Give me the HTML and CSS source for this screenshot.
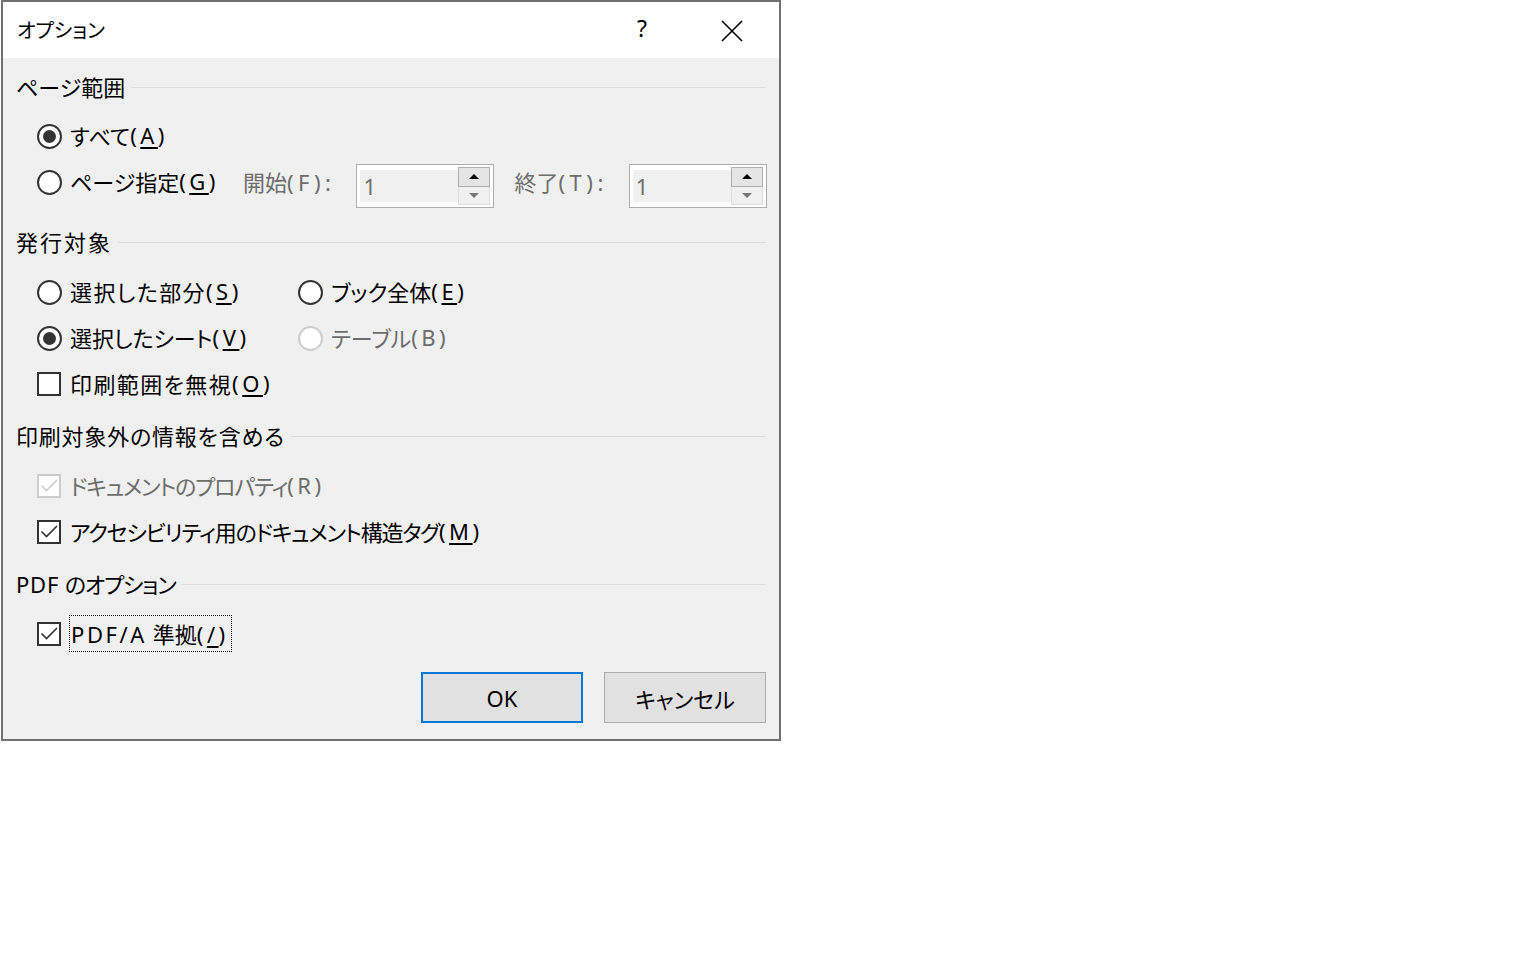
FILE: index.html
```html
<!DOCTYPE html>
<html lang="ja">

<head>
    <meta charset="UTF-8">
    <meta name="viewport" content="width=device-width, initial-scale=1.0">
    <title>オプション</title>
    <link rel="stylesheet" href="styles.css">
</head>

<body>
    <div class="dialog">
        <div class="titleBar">
            <span class="title">オプション</span>
            <span class="help">?</span>
            <span class="close">
                <svg width="22" height="22" viewBox="0 0 22 22">
                    <path d="M1 1L21 21M21 1L1 21" stroke="#000" stroke-width="1.6" fill="none" />
                </svg>
            </span>
        </div>
        <div class="content">
            <div class="group first">
                <div class="groupHead"><span>ページ範囲</span><i></i></div>
                <div class="row">
                    <label class="opt"><span class="radio on"></span>すべて<span class="k">(<u>A</u>)</span></label>
                </div>
                <div class="row">
                    <label class="opt"><span class="radio"></span>ページ指定<span class="k">(<u>G</u>)</span></label>
                    <span class="fieldLabel from">開始<span class="k">(F):</span></span>
                    <div class="spin">
                        <div class="spinText">1</div>
                        <div class="spinBtns">
                            <span class="up"></span>
                            <span class="down"></span>
                        </div>
                    </div>
                    <span class="fieldLabel to">終了<span class="k">(T):</span></span>
                    <div class="spin">
                        <div class="spinText">1</div>
                        <div class="spinBtns">
                            <span class="up"></span>
                            <span class="down"></span>
                        </div>
                    </div>
                </div>
            </div>

            <div class="group second">
                <div class="groupHead"><span class="wide2">発行対象</span><i></i></div>
                <div class="grid">
                    <label class="opt"><span class="radio"></span><span class="wide">選択した部分</span><span class="k">(<u>S</u>)</span></label>
                    <label class="opt"><span class="radio"></span>ブック全体<span class="k">(<u>E</u>)</span></label>
                    <label class="opt"><span class="radio on"></span>選択したシート<span class="k">(<u>V</u>)</span></label>
                    <label class="opt off"><span class="radio"></span>テーブル<span class="k">(B)</span></label>
                </div>
                <div class="row">
                    <label class="opt"><span class="check"></span><span class="wide">印刷範囲を無視</span><span class="k">(<u>O</u>)</span></label>
                </div>
            </div>

            <div class="group">
                <div class="groupHead"><span class="wide1">印刷対象外の情報を含める</span><i></i></div>
                <div class="row">
                    <label class="opt off">
                        <span class="check">
                            <svg width="20" height="20" viewBox="0 0 20 20">
                                <path d="M2.5 9.5L7.5 14.5L18 4" stroke="#ccc" stroke-width="1.6" fill="none" />
                            </svg>
                        </span><span class="tight">ドキュメントのプロパティ</span><span class="k">(R)</span>
                    </label>
                </div>
                <div class="row">
                    <label class="opt">
                        <span class="check">
                            <svg width="20" height="20" viewBox="0 0 20 20">
                                <path d="M2.5 9.5L7.5 14.5L18 4" stroke="#333" stroke-width="1.6" fill="none" />
                            </svg>
                        </span><span class="tight">アクセシビリティ用のドキュメント構造タグ</span><span class="k">(<u>M</u>)</span>
                    </label>
                </div>
            </div>

            <div class="group">
                <div class="groupHead"><span><span class="pdf">PDF</span> <span class="tight">のオプション</span></span><i></i></div>
                <div class="row">
                    <label class="opt">
                        <span class="check">
                            <svg width="20" height="20" viewBox="0 0 20 20">
                                <path d="M2.5 9.5L7.5 14.5L18 4" stroke="#333" stroke-width="1.6" fill="none" />
                            </svg>
                        </span><span class="focus"><span class="k pdfa">PDF/A</span> 準拠<span class="k">(<u>/</u>)</span></span>
                    </label>
                </div>
            </div>

            <div class="buttons">
                <button class="btn default">OK</button>
                <button class="btn">キャンセル</button>
            </div>
        </div>
    </div>
</body>

</html>
```

FILE: styles.css
```css
body {
    margin: 0;
    background-color: #fff;
    font-family: "Noto Sans", "Noto Sans CJK JP", sans-serif;
    font-size: 22px;
    color: #000;
    font-feature-settings: "palt";
}

.dialog {
    width: 776px;
    height: 737px;
    margin-left: 1px;
    border: 2px solid #707070;
    background-color: #f0f0f0;
    display: flex;
    flex-direction: column;
}

.titleBar {
    height: 56px;
    background-color: #fff;
    display: flex;
    align-items: center;
}

.title {
    font-size: 20px;
    padding-left: 14px;
    padding-bottom: 2px;
    flex: 1;
}

.help {
    font-size: 23px;
    width: 30px;
    text-align: center;
    margin-right: 64px;
    padding-bottom: 4px;
}

.close {
    width: 22px;
    height: 22px;
    margin-right: 36px;
    margin-bottom: 2px;
}

.content {
    padding: 13px 13px 0 13px;
    display: flex;
    flex-direction: column;
}

.group {
    margin-bottom: 14px;
}

.group.first {
    margin-bottom: 22px;
}

.groupHead {
    height: 30px;
    display: flex;
    align-items: center;
    margin-bottom: 12px;
    white-space: nowrap;
}

.group.first .groupHead {
    margin-bottom: 11px;
}

.groupHead i {
    flex: 1;
    height: 1px;
    background-color: #dcdcdc;
    margin-left: 6px;
    margin-top: 2px;
}

.pdf {
    letter-spacing: 0.8px;
}

.k {
    letter-spacing: 3.5px;
}

.wide {
    letter-spacing: 1.4px;
}

.wide1 {
    letter-spacing: 0.8px;
}

.wide2 {
    letter-spacing: 2px;
}

.tight {
    letter-spacing: -1.2px;
}

.row {
    height: 46px;
    display: flex;
    align-items: center;
    padding-left: 21px;
    white-space: nowrap;
}

.row > * {
    flex-shrink: 0;
}

.grid {
    display: grid;
    grid-template-columns: 261px 1fr;
    grid-auto-rows: 46px;
    padding-left: 21px;
    white-space: nowrap;
}

.opt {
    display: flex;
    align-items: center;
}

.opt.off {
    color: #6d6d6d;
}

.radio {
    width: 25px;
    height: 25px;
    box-sizing: border-box;
    border: 2px solid #333;
    border-radius: 50%;
    margin-right: 8px;
    margin-top: 2px;
    display: flex;
    align-items: center;
    justify-content: center;
    background-color: #fff;
    flex-shrink: 0;
}

.radio.on::after {
    content: "";
    width: 13px;
    height: 13px;
    border-radius: 50%;
    background-color: #333;
}

.opt.off .radio {
    border-color: #ccc;
}

.check {
    width: 24px;
    height: 24px;
    box-sizing: border-box;
    border: 2px solid #333;
    margin-right: 9px;
    margin-top: 2px;
    background-color: #fff;
    display: flex;
    flex-shrink: 0;
}

.opt.off .check {
    border-color: #ccc;
}

u {
    text-decoration-thickness: 2px;
    text-underline-offset: 3px;
}

.focus {
    outline: 1px dotted #000;
    outline-offset: 0;
    padding: 1px 2px 2px 1px;
}

.k.pdfa {
    letter-spacing: 2.6px;
}

.fieldLabel {
    color: #6d6d6d;
}

.fieldLabel .k {
    letter-spacing: 4.5px;
}

.fieldLabel.from {
    margin-left: 24px;
    margin-right: 21px;
}

.fieldLabel.to {
    margin-left: 20px;
    margin-right: 21px;
}

.spin {
    width: 138px;
    height: 44px;
    box-sizing: border-box;
    border: 1px solid #adadad;
    background-color: #fff;
    padding: 2px 3px;
    display: flex;
    margin-top: 10px;
}

.spinText {
    flex: 1;
    background-color: #f0f0f0;
    margin: 3px 0;
    color: #6d6d6d;
    padding-left: 3px;
    line-height: 32px;
}

.spinBtns {
    width: 32px;
    display: flex;
    flex-direction: column;
}

.spinBtns span {
    flex: 1;
    display: flex;
    align-items: center;
    justify-content: center;
}

.up {
    background-color: #e5e5e5;
    border: 1px solid #adadad;
}

.down {
    background-color: #f0f0f0;
    border: 1px solid #dcdcdc;
    border-top: none;
}

.up::after {
    content: "";
    border-left: 5px solid transparent;
    border-right: 5px solid transparent;
    border-bottom: 5px solid #000;
}

.down::after {
    content: "";
    border-left: 5px solid transparent;
    border-right: 5px solid transparent;
    border-top: 5px solid #777;
}

.buttons {
    display: flex;
    justify-content: flex-end;
    gap: 21px;
    margin-top: 2px;
}

.btn {
    width: 162px;
    height: 51px;
    background-color: #e1e1e1;
    border: 1px solid #adadad;
    font-family: "Noto Sans", "Noto Sans CJK JP", sans-serif;
    font-size: 22px;
    color: #000;
    padding: 0;
    font-feature-settings: "palt";
}

.btn.default {
    border: 2px solid #0078d7;
}
```
